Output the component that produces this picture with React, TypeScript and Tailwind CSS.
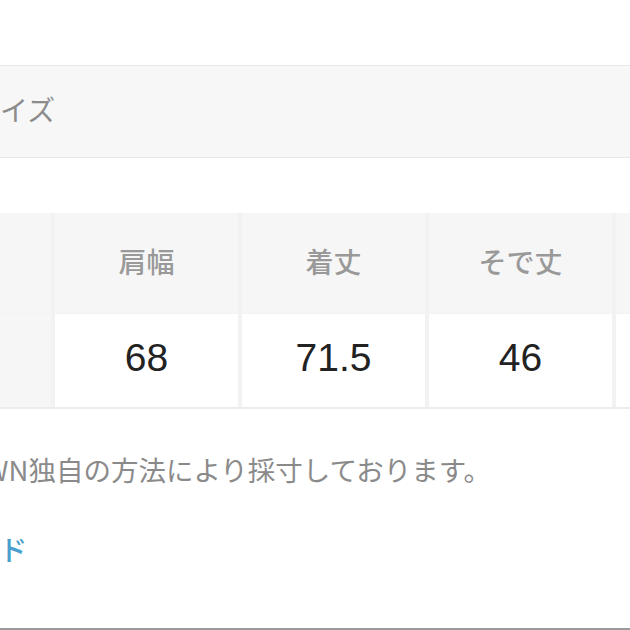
const columns = [
  { label: '肩幅', value: '68' },
  { label: '着丈', value: '71.5' },
  { label: 'そで丈', value: '46' },
  { label: '身幅', value: '62' },
];

export default function App() {
  return (
    <div className="w-[630px] h-[630px] overflow-hidden bg-white flex flex-col font-['Noto_Sans_CJK_JP','Noto_Sans',sans-serif]">
      <div className="-ml-[130px] w-[900px] pt-[65px]">
        {/* section header */}
        <div className="h-[93px] border-y border-[#e8e8e8] bg-[#f7f7f7] flex items-center pl-[102px] pb-[6px] text-[28px] text-[#8c8c8c]">
          サイズ
        </div>

        {/* size table */}
        <div className="mt-[55px] border-b-2 border-[#ececec] bg-[#f2f2f2] grid grid-cols-[181px_183px_183px_183px_183px] grid-rows-[100px_93px] gap-x-[4px] gap-y-[1px]">
          <div className="bg-[#f6f6f6]" />
          {columns.map((c) => (
            <div
              key={c.label}
              className="bg-[#f6f6f6] flex items-center justify-center pb-[4px] text-[28px] font-medium text-[#999999]"
            >
              {c.label}
            </div>
          ))}
          <div className="bg-[#f6f6f6]" />
          {columns.map((c) => (
            <div
              key={c.value}
              className="bg-white flex items-center justify-center pb-[4px] text-[39px] text-[#222222] font-['Liberation_Sans',Arial,sans-serif]"
            >
              {c.value}
            </div>
          ))}
        </div>

        <p className="mt-[45px] pl-[7px] leading-[30px] text-[27.5px] text-[#8a8a8a] whitespace-nowrap">
          ZOZOTOWN独自の方法により採寸しております。
        </p>

        <a className="block mt-[50px] -ml-[10px] leading-[30px] text-[28px] font-medium text-[#4a9fce] whitespace-nowrap">
          サイズガイド
        </a>
      </div>
      <div className="mt-auto h-[2px] bg-[#9a9a9a]" />
    </div>
  );
}
